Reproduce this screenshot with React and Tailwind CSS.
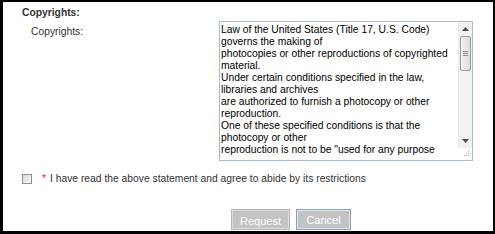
import React from "react";

const lines = [
  "Law of the United States (Title 17, U.S. Code)",
  "governs the making of",
  "photocopies or other reproductions of copyrighted",
  "material.",
  "Under certain conditions specified in the law,",
  "libraries and archives",
  "are authorized to furnish a photocopy or other",
  "reproduction.",
  "One of these specified conditions is that the",
  "photocopy or other",
  'reproduction is not to be "used for any purpose',
];

function Scrollbar() {
  return (
    <div className="flex flex-col w-[14px] h-full">
      <div className="flex-1 flex flex-col bg-[#f2f2f2] border-l border-[#e8e8e8]">
        <div className="h-[14px] flex items-center justify-center">
          <svg width="7" height="4" viewBox="0 0 7 4">
            <path d="M0 4 L3.5 0 L7 4 Z" fill="#4a4a4a" />
          </svg>
        </div>
        <div className="mx-[1px] h-[35px] rounded-[2px] border border-[#9c9c9c] bg-gradient-to-r from-[#f4f4f4] to-[#dcdcdc] flex flex-col items-center justify-center gap-[1px]">
          <div className="w-[5px] h-[1px] bg-[#8a8a8a]" />
          <div className="w-[5px] h-[1px] bg-[#8a8a8a]" />
          <div className="w-[5px] h-[1px] bg-[#8a8a8a]" />
        </div>
        <div className="flex-1" />
        <div className="h-[14px] flex items-center justify-center">
          <svg width="7" height="4" viewBox="0 0 7 4">
            <path d="M0 0 L7 0 L3.5 4 Z" fill="#4a4a4a" />
          </svg>
        </div>
      </div>
      <div className="h-[12px] bg-white relative">
        <svg width="14" height="12" viewBox="0 0 14 12" className="absolute inset-0">
          <rect x="10" y="3" width="1" height="1" fill="#b0b0b0" />
          <rect x="8" y="5" width="1" height="1" fill="#b0b0b0" />
          <rect x="10" y="5" width="1" height="1" fill="#b0b0b0" />
          <rect x="6" y="7" width="1" height="1" fill="#b0b0b0" />
          <rect x="8" y="7" width="1" height="1" fill="#b0b0b0" />
          <rect x="10" y="7" width="1" height="1" fill="#b0b0b0" />
        </svg>
      </div>
    </div>
  );
}

export default function App() {
  return (
    <div
      className="w-[495px] h-[234px] bg-black pt-[2px] pl-[3px] pr-[2px] pb-[3px]"
      style={{ fontFamily: '"Liberation Sans", Arial, sans-serif' }}
    >
      <div className="w-full h-full bg-white flex flex-col text-[10.3px] leading-[12px] text-[#2b2b2b]">
        <div className="ml-[19px] mt-[5px] font-bold text-[#333]">Copyrights:</div>
        <div className="flex mt-[2px]">
          <div className="w-[216px] pl-[28px] pt-[5px] text-[#333]">Copyrights:</div>
          <div className="w-[254px] h-[140px] border border-[#a9bbd1] flex bg-white">
            <div className="flex-1 overflow-hidden pl-[1px] pt-[2px] text-black">
              {lines.map((l, i) => (
                <div key={i} className="whitespace-nowrap">{l}</div>
              ))}
            </div>
            <Scrollbar />
          </div>
        </div>
        <div className="flex items-center h-[12px] mt-[12px] ml-[19px]">
          <div className="w-[10px] h-[10px] border border-[#8f8f8f] bg-gradient-to-br from-[#dcdcdc] to-[#f6f6f6]" />
          <span className="ml-[10px] text-[#e0262b]">*</span>
          <span className="ml-[4px] text-[#333]">I have read the above statement and agree to abide by its restrictions</span>
        </div>
        <div className="flex mt-[25px] ml-[229px] gap-[8px]">
          <button className="w-[57px] h-[19px] bg-[#c3c3c3] border border-[#dcdcdc] outline outline-1 outline-[#b5b5b5] text-white text-[11px] pt-[3px] leading-[12px] font-normal">
            Request
          </button>
          <button className="w-[53px] h-[19px] bg-[#c3c3c3] border border-[#e4e4e4] outline outline-1 outline-[#86a3c6] text-white text-[11px] leading-[12px]">
            Cancel
          </button>
        </div>
      </div>
    </div>
  );
}
